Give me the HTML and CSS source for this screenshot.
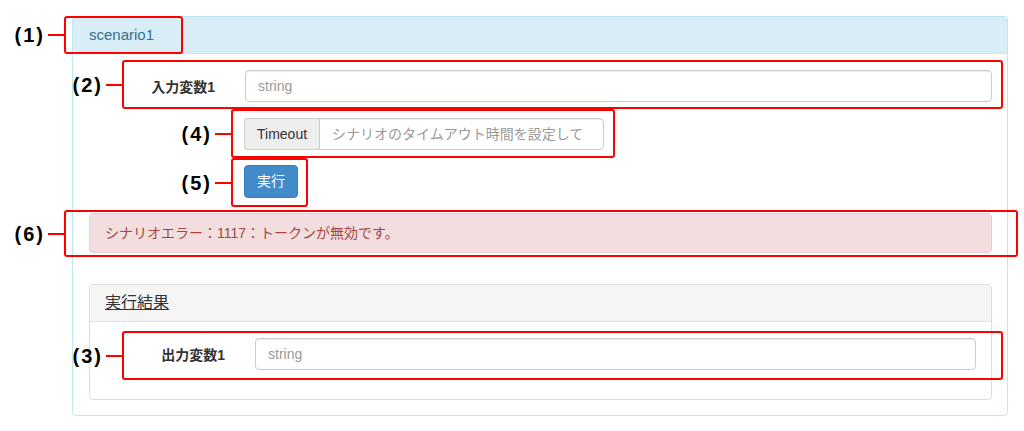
FILE: index.html
```html
<!DOCTYPE html>
<html lang="ja">
<head>
<meta charset="utf-8">
<title>scenario1</title>
<link rel="stylesheet" href="styles.css">
</head>
<body>
<div class="page">
  <div class="panel">
    <div class="panel-heading">scenario1</div>
    <div class="panel-body">
      <div class="form-row">
        <label class="row-label">入力変数1</label>
        <div class="row-field"><input class="form-control" type="text" placeholder="string"></div>
      </div>
      <div class="form-row">
        <div class="row-label"></div>
        <div class="row-field">
          <div class="input-group">
            <span class="addon">Timeout</span>
            <input class="form-control group-input" type="text" placeholder="シナリオのタイムアウト時間を設定して">
          </div>
        </div>
      </div>
      <div class="form-row">
        <div class="row-label"></div>
        <div class="row-field btn-field"><button class="btn">実行</button></div>
      </div>
      <div class="alert">シナリオエラー：1117：トークンが無効です。</div>
      <div class="result-panel">
        <div class="result-heading"><span class="result-title">実行結果</span></div>
        <div class="result-body">
          <div class="form-row result-row">
            <label class="row-label">出力変数1</label>
            <div class="row-field"><input class="form-control" type="text" placeholder="string"></div>
          </div>
        </div>
      </div>
    </div>
  </div>

  <div class="annotations">
    <div class="mark m1"><span class="tag"><span class="tag-text">(1)</span><span class="tag-line"></span></span></div>
    <div class="mark m2"><span class="tag"><span class="tag-text">(2)</span><span class="tag-line"></span></span></div>
    <div class="mark m4"><span class="tag"><span class="tag-text">(4)</span><span class="tag-line"></span></span></div>
    <div class="mark m5"><span class="tag"><span class="tag-text">(5)</span><span class="tag-line"></span></span></div>
    <div class="mark m6"><span class="tag"><span class="tag-text">(6)</span><span class="tag-line"></span></span></div>
    <div class="mark m3"><span class="tag"><span class="tag-text">(3)</span><span class="tag-line"></span></span></div>
  </div>
</div>
</body>
</html>
```
FILE: styles.css
```css
* { box-sizing: border-box; }
html, body { margin: 0; padding: 0; background: #fff; }
body {
  font-family: "Liberation Sans", Arial, "Noto Sans CJK JP", sans-serif;
  font-size: 14px;
  color: #333;
  width: 1024px;
  height: 431px;
  overflow: hidden;
}
.page { position: relative; width: 1024px; height: 431px; padding-top: 16px; }

.panel {
  margin-left: 72px;
  width: 936px;
  height: 400px;
  border: 1px solid #bce8f1;
  border-radius: 4px;
}
.panel-heading {
  height: 37px;
  line-height: 36px;
  padding: 0 16px;
  background: #d9edf7;
  border-bottom: 1px solid #bce8f1;
  color: #31708f;
  font-size: 15px;
  border-radius: 3px 3px 0 0;
}
.panel-body { padding: 16px 0 15px 0; }

.form-row {
  display: grid;
  grid-template-columns: 157px 1fr;
  align-items: center;
  margin-bottom: 16px;
}
.form-row:nth-child(2) { margin-bottom: 15px; }
.form-row:nth-child(3) { margin-bottom: 15px; }
.row-label {
  text-align: right;
  padding-right: 15px;
  font-weight: bold;
  font-size: 14px;
  color: #333;
}
.row-field { padding: 0 15px; }
.btn-field { padding-left: 14px; }

.form-control {
  display: block;
  width: 100%;
  height: 32px;
  padding: 6px 12px;
  font-family: inherit;
  font-size: 14px;
  line-height: 18px;
  color: #555;
  background: #fff;
  border: 1px solid #ccc;
  border-radius: 4px;
  box-shadow: inset 0 1px 1px rgba(0,0,0,.075);
  outline: none;
}
.form-control::placeholder { color: #999; }

.input-group { display: flex; width: 360px; margin-left: -1px; }
.addon {
  height: 32px;
  padding: 6px 12px;
  line-height: 18px;
  font-size: 14px;
  color: #333;
  background: #eee;
  border: 1px solid #ccc;
  border-right: 0;
  border-radius: 4px 0 0 4px;
}
.group-input { flex: 1; border-radius: 0 4px 4px 0; }

.btn {
  height: 33px;
  padding: 6px 12px;
  font-family: inherit;
  font-size: 14px;
  line-height: 19px;
  color: #fff;
  background: #428bca;
  border: 1px solid #357ebd;
  border-radius: 4px;
}

.alert {
  margin: 0 15px 0 16px;
  height: 40px;
  padding: 9px 15px;
  line-height: 20px;
  color: #a94442;
  background: #f2dede;
  border: 1px solid #ebccd1;
  border-radius: 4px;
}

.result-panel {
  margin: 31px 15px 0 16px;
  height: 116px;
  border: 1px solid #ddd;
  border-radius: 4px;
}
.result-heading {
  height: 37px;
  line-height: 36px;
  padding: 0 15px;
  background: #f5f5f5;
  border-bottom: 1px solid #d3e9f2;
  border-radius: 3px 3px 0 0;
}
.result-title { font-size: 16px; color: #333; text-decoration: underline; }
.result-body { padding: 16px 0; }
.result-row { grid-template-columns: 150px 1fr; margin-bottom: 0; }

/* annotation overlay */
.annotations { position: absolute; left: 0; top: 0; width: 1024px; height: 431px; pointer-events: none; }
.mark {
  position: absolute;
  border: 2px solid #ff0000;
  border-radius: 3px;
}
.m1 { left: 64px; top: 16px; width: 119px; height: 38px; }
.m2 { left: 122px; top: 60px; width: 881px; height: 49px; }
.m4 { left: 231px; top: 109px; width: 384px; height: 49px; }
.m5 { left: 231px; top: 158px; width: 77px; height: 49px; }
.m6 { left: 64px; top: 210px; width: 954px; height: 47px; }
.m3 { left: 122px; top: 331px; width: 881px; height: 49px; }
.tag {
  position: absolute;
  right: 100%;
  top: 50%;
  transform: translateY(-50%);
  display: flex;
  align-items: center;
  margin-right: 1px;
}
.tag-text {
  font-family: "Liberation Sans", Arial, sans-serif;
  font-weight: bold;
  font-size: 20px;
  line-height: 22px;
  letter-spacing: 2px;
  color: #000;
  margin-right: 3px;
}
.tag-line { width: 17px; height: 2px; background: #ff0000; }
```
